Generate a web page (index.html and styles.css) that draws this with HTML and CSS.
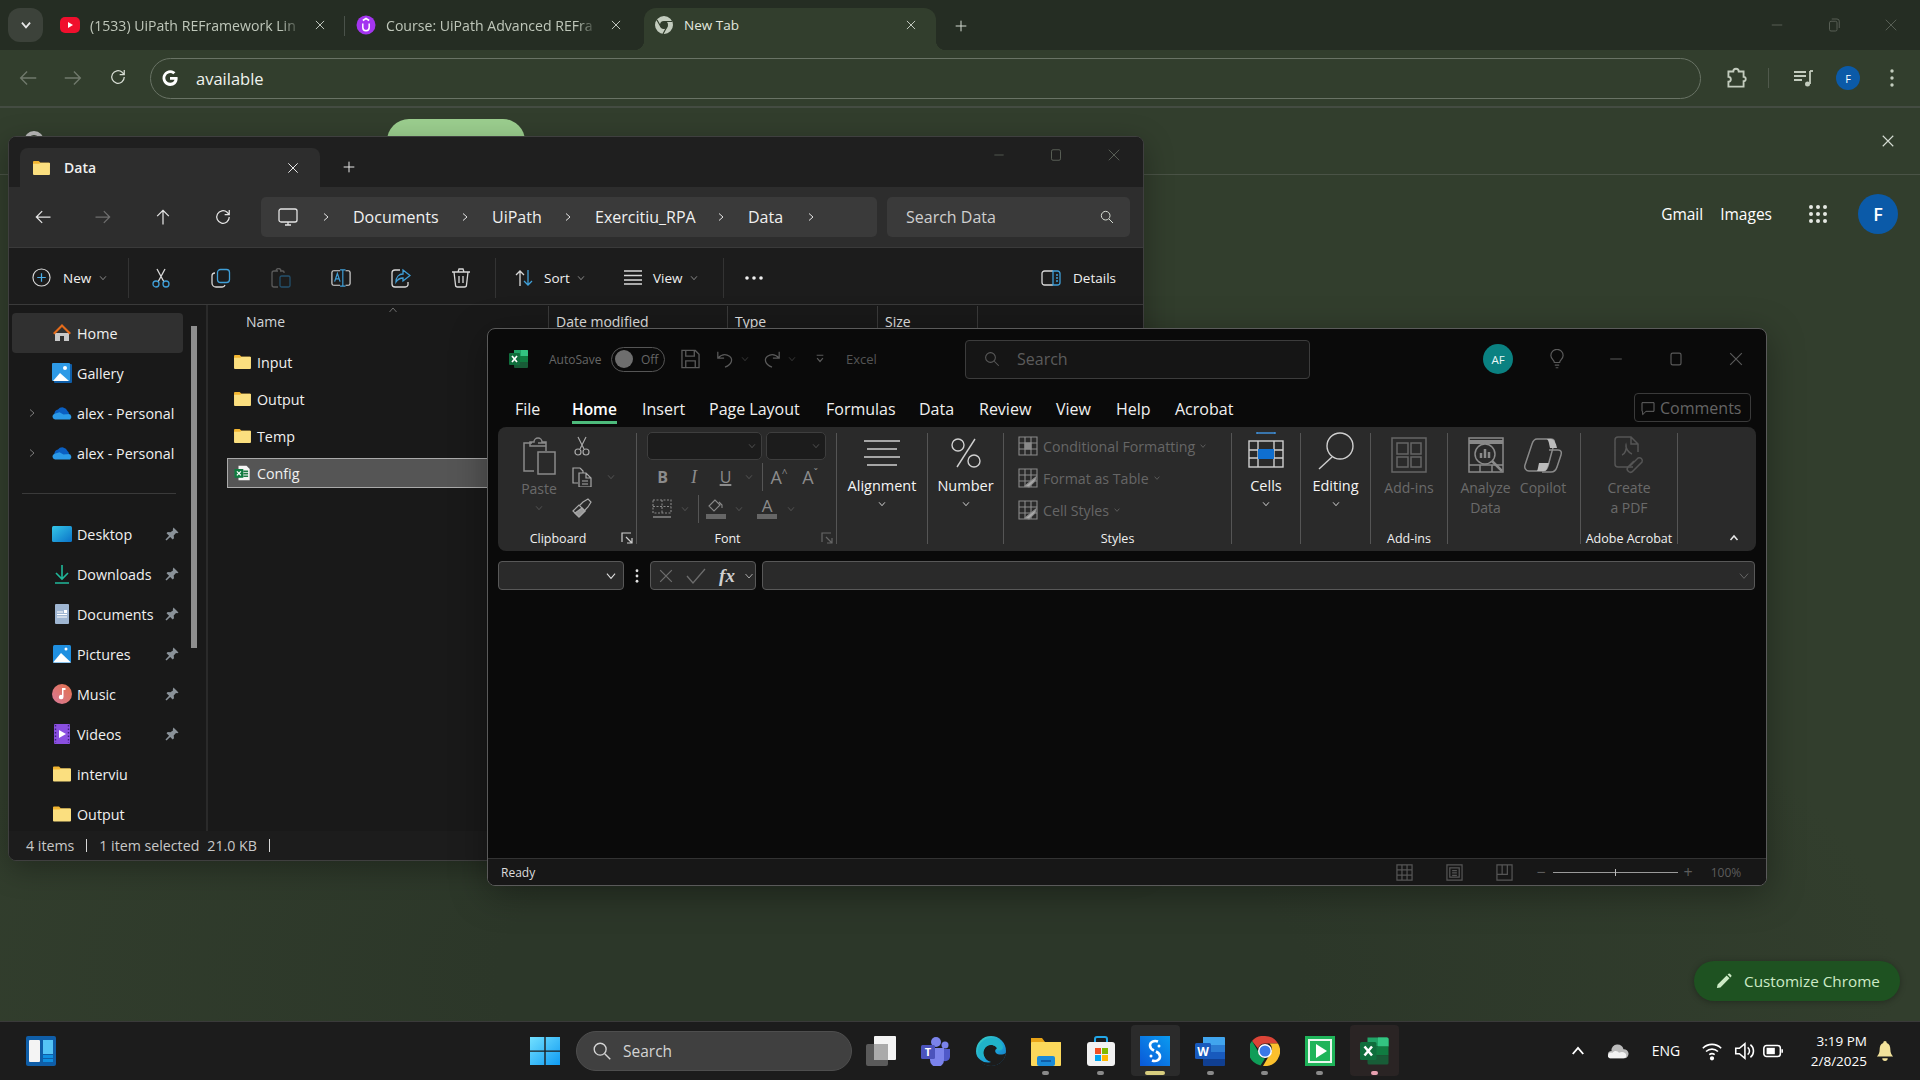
FILE: index.html
```html
<!DOCTYPE html>
<html lang="en">
<head>
<meta charset="utf-8">
<title>Desktop</title>
<link rel="stylesheet" href="styles.css">
</head>
<body>
<svg class="defs" aria-hidden="true">
  <symbol id="x" viewBox="0 0 24 24"><path d="M5 5l14 14M19 5L5 19"/></symbol>
  <symbol id="plus" viewBox="0 0 24 24"><path d="M12 4v16M4 12h16"/></symbol>
  <symbol id="min" viewBox="0 0 24 24"><path d="M5 12h14"/></symbol>
  <symbol id="max" viewBox="0 0 24 24"><rect x="6" y="5" width="12" height="14" rx="2"/></symbol>
  <symbol id="restore" viewBox="0 0 24 24"><rect x="6" y="7" width="10" height="13" rx="2"/><path d="M9 4h7a3 3 0 0 1 3 3v9"/></symbol>
  <symbol id="cd" viewBox="0 0 24 24"><path d="M5 8l7 8 7-8"/></symbol>
  <symbol id="cu" viewBox="0 0 24 24"><path d="M5 16l7-8 7 8"/></symbol>
  <symbol id="cr" viewBox="0 0 24 24"><path d="M8 5l8 7-8 7"/></symbol>
  <symbol id="al" viewBox="0 0 24 24"><path d="M21 12H4M11 5l-7 7 7 7"/></symbol>
  <symbol id="ar" viewBox="0 0 24 24"><path d="M3 12h17M13 5l7 7-7 7"/></symbol>
  <symbol id="au" viewBox="0 0 24 24"><path d="M12 21V4M5 11l7-7 7 7"/></symbol>
  <symbol id="reload" viewBox="0 0 24 24"><path d="M19.5 12a7.5 7.5 0 1 1-2.5-5.6L19.5 9M19.5 3.5V9H14"/></symbol>
  <symbol id="search" viewBox="0 0 24 24"><circle cx="10" cy="10" r="6.5"/><path d="M15 15l6 6"/></symbol>
  <symbol id="folder" viewBox="0 0 20 17"><path fill="#f2b531" stroke="none" d="M1 2a1 1 0 0 1 1-1h5l2 2h9a1 1 0 0 1 1 1v3H1z"/><path fill="#fbdf7f" stroke="none" d="M1 4h6.5L9 3h9a1 1 0 0 1 1 1v11a1 1 0 0 1-1 1H2a1 1 0 0 1-1-1z"/></symbol>
  <symbol id="xlsfile" viewBox="0 0 20 20"><path fill="#f5f5f5" stroke="none" d="M5 1h10l4 4v14H5z"/><path fill="#1d7b44" stroke="none" d="M11 7h6v2h-6zm0 3h6v2h-6zm0 3h6v2h-6z"/><rect x="0" y="5" width="11" height="11" fill="#107c41" stroke="none"/><path stroke="#fff" stroke-width="1.6" fill="none" d="M3 8l5 5M8 8l-5 5"/></symbol>
  <symbol id="pin" viewBox="0 0 16 16"><path fill="#8a9299" stroke="none" d="M9.500 1.500l5 5-1.200 .8-1.300-.2-2.300 2.500.3 2.700-1.300 1.200-2.500-2.600-3.700 3.600-1-1 3.600-3.700-2.600-2.500 1.200-1.300 2.700.3L9 4.500l-.2-1.300z"/></symbol>
  <symbol id="cloud" viewBox="0 0 20 14"><path fill="#0a5fc2" stroke="none" d="M5 12a4.500 4.500 0 0 1 1-8.500A5.500 5.500 0 0 1 15.500 5 4 4 0 0 1 17 8z"/><path fill="#2b9ae8" stroke="none" d="M3 13.500a3 3 0 0 1-.5-5.800l5-1.500 4 2.300 5-.5a3 3 0 0 1 1.500 5.500z"/></symbol>
  <symbol id="xllogo" viewBox="0 0 20 20"><path fill="#21a366" stroke="none" d="M5 1h13a1 1 0 0 1 1 1v5H5z"/><path fill="#33c481" stroke="none" d="M12 1h6a1 1 0 0 1 1 1v5h-7z"/><path fill="#107c41" stroke="none" d="M5 7h14v6H5z"/><path fill="#185c37" stroke="none" d="M5 13h14v5a1 1 0 0 1-1 1H6a1 1 0 0 1-1-1z"/><rect x="0" y="4" width="11" height="12" rx="1" fill="#0f6e3c" stroke="none"/><path stroke="#fff" stroke-width="1.7" fill="none" d="M3 7l5 6M8 7l-5 6"/></symbol>
  <symbol id="launch" viewBox="0 0 12 12"><path d="M1 10V1h9M5 5l6 6M6 11h5V6"/></symbol>
</svg>

<div class="desktop">
  <main class="chrome">
    <div class="tabstrip">
      <div class="tab-search"><svg class="ic w14 thick"><use href="#cd"/></svg></div>
      <div class="tab">
        <svg class="tab-ico" viewBox="0 0 20 20"><rect x="0" y="2" width="20" height="16" rx="5" fill="#f00f2d"/><path fill="#fff" d="M8 7l5 3-5 3z"/></svg>
        <span class="tab-title">(1533) UiPath REFramework Lin</span>
        <svg class="ic w14 tab-x"><use href="#x"/></svg>
      </div>
      <div class="tab-sep"></div>
      <div class="tab">
        <svg class="tab-ico" viewBox="0 0 20 20"><circle cx="10" cy="10" r="9.500" fill="#a435f0"/><path fill="none" stroke="#fff" stroke-width="1.500" d="M6.800 8.500v4a3.200 3.200 0 0 0 6.400 0v-4M6.800 5.500L10 3.500l3.200 2"/></svg>
        <span class="tab-title">Course: UiPath Advanced REFra</span>
        <svg class="ic w14 tab-x"><use href="#x"/></svg>
      </div>
      <div class="tab tab-active">
        <svg class="tab-ico" viewBox="0 0 20 20"><circle cx="10" cy="10" r="6.500" fill="none" stroke="#c3ccbe" stroke-width="5"/><circle cx="10" cy="10" r="3.200" fill="#323e2d"/><path d="M10 6.500h8M7 12L3 5M12.500 12.500L9 19" stroke="#323e2d" stroke-width="1.200"/></svg>
        <span class="tab-title">New Tab</span>
        <svg class="ic w14 tab-x"><use href="#x"/></svg>
      </div>
      <svg class="ic w16 new-tab"><use href="#plus"/></svg>
      <div class="caption dim">
        <svg class="ic w18"><use href="#min"/></svg>
        <svg class="ic w18"><use href="#restore"/></svg>
        <svg class="ic w18"><use href="#x"/></svg>
      </div>
    </div>

    <div class="toolbar">
      <div class="tool-nav">
        <svg class="ic w22 faint"><use href="#al"/></svg>
        <svg class="ic w22 faint"><use href="#ar"/></svg>
        <svg class="ic w20"><use href="#reload"/></svg>
      </div>
      <div class="omnibox">
        <svg class="g-logo" viewBox="0 0 24 24"><path d="M12 10.500v3.800h6c-.6 2.600-2.900 4-5.800 4a6.400 6.400 0 1 1 4.200-11.200l2.800-2.800A10.400 10.400 0 1 0 12.200 22.600c5.800 0 10-4 10-10 0-.8-.1-1.400-.2-2.100z"/></svg>
        <span>available</span>
      </div>
      <svg class="puzzle" viewBox="0 0 24 24"><path d="M5 6h4.500a2.500 2.500 0 0 1 5 0H19v5a2 2 0 0 1 0 4v5H5v-4.500a2 2 0 0 0 0-4.500z"/></svg>
      <div class="tool-sep"></div>
      <svg class="media" viewBox="0 0 24 24"><path d="M3 6h12M3 10h12M3 14h8"/><path d="M19 5v13"/><path d="M19 5h3"/><circle cx="16.500" cy="18" r="2.500" fill="#c3ccbe" stroke="none"/></svg>
      <div class="avatar av-small">F</div>
      <svg class="kebab" viewBox="0 0 4 20"><circle cx="2" cy="3" r="1.700"/><circle cx="2" cy="10" r="1.700"/><circle cx="2" cy="17" r="1.700"/></svg>
    </div>

    <div class="infobar">
      <svg class="info-ico" viewBox="0 0 20 20"><circle cx="10" cy="10" r="8" fill="none" stroke="#bbb" stroke-width="4"/></svg>
      <span class="info-text">Chrome isn't your default browser</span>
      <span class="info-btn">Set as default</span>
      <svg class="ic w18 info-x"><use href="#x"/></svg>
    </div>

    <div class="page">
      <header class="page-head">
        <a class="plink">Gmail</a>
        <a class="plink">Images</a>
        <svg class="apps" viewBox="0 0 20 20"><g><circle cx="3" cy="3" r="2"/><circle cx="10" cy="3" r="2"/><circle cx="17" cy="3" r="2"/><circle cx="3" cy="10" r="2"/><circle cx="10" cy="10" r="2"/><circle cx="17" cy="10" r="2"/><circle cx="3" cy="17" r="2"/><circle cx="10" cy="17" r="2"/><circle cx="17" cy="17" r="2"/></g></svg>
        <div class="avatar av-big">F</div>
      </header>
      <div class="customize">
        <svg class="pencil" viewBox="0 0 18 18"><path d="M1 17l.8-4L12 2.800l3.200 3.200L5 16.200zM13 1.800l1.200-1a1 1 0 0 1 1.400 0l1.600 1.600a1 1 0 0 1 0 1.400l-1 1.200z"/></svg>
        <span>Customize Chrome</span>
      </div>
    </div>
  </main>

  <footer class="taskbar">
    <div class="tb-left">
      <svg class="tb-ico" viewBox="0 0 30 30"><rect x="0" y="0" width="30" height="30" rx="2" fill="#0f5ea8"/><rect x="3" y="4" width="11" height="22" rx="1" fill="#f4f4f4"/><rect x="17" y="4" width="10" height="14" fill="#55c4f5"/><rect x="17" y="19" width="10" height="3" fill="#0f8fe0"/><rect x="17" y="23" width="10" height="3" fill="#0f8fe0"/></svg>
    </div>
    <div class="tb-start">
      <svg class="tb-ico" viewBox="0 0 30 30"><defs><linearGradient id="wg" x1="0" y1="0" x2="1" y2="1"><stop offset="0" stop-color="#72e0ff"/><stop offset="1" stop-color="#0f9bf2"/></linearGradient></defs><path fill="url(#wg)" d="M0 1h14.300v13.500H0zM15.700 1H30v13.500H15.700zM0 15.700h14.300V29H0zM15.700 15.700H30V29H15.700z"/></svg>
    </div>
    <div class="tb-search">
      <svg class="ic w22 tb-search-ico"><use href="#search"/></svg>
      <span>Search</span>
    </div>
    <div class="tb-apps">
      <div class="tb-app"><svg class="tb-ico" viewBox="0 0 30 30"><rect x="0" y="8" width="22" height="22" rx="2" fill="#5a5a5a"/><rect x="8" y="0" width="22" height="24" rx="1" fill="#f4f4f4"/><rect x="8" y="8" width="14" height="16" fill="#aaa"/></svg></div>
      <div class="tb-app"><svg class="tb-ico" viewBox="0 0 30 30"><circle cx="24" cy="9" r="3.500" fill="#7b83eb"/><circle cx="15" cy="6" r="5" fill="#7b83eb"/><path fill="#5059c9" d="M20 13h9v8a5 5 0 0 1-9 2z"/><path fill="#7b83eb" d="M9 12h14v12a7 7 0 0 1-14 0z"/><rect x="0" y="9" width="14" height="14" rx="1.500" fill="#4b53bc"/><text class="svg-t" x="7" y="20" text-anchor="middle" font-size="11">T</text></svg></div>
      <div class="tb-app"><svg class="tb-ico" viewBox="0 0 30 30"><defs><linearGradient id="eg" x1="0" y1="0" x2="1" y2="1"><stop offset="0" stop-color="#39d1c3"/><stop offset=".6" stop-color="#1b9fd8"/><stop offset="1" stop-color="#1668b8"/></linearGradient></defs><circle cx="15" cy="15" r="15" fill="url(#eg)"/><path fill="#1c1c1c" d="M30 17c-3 2-8 2-10 0-1.500-1.500-1-4 1.500-5C19 8 11 7 8 13c-2 4 0 11 7 13-6 2-13-2-15-8 .5 7 7 12 15 12 8 0 14-6 15-13z"/><path fill="#20b3c9" d="M2 15C2 8 8 2 15 2c6 0 11 3.500 12 9 0 3-3 4-6 3 1-5-10-8-13 0-1 2-1 5 1 8-5-1-7-4-7-7z"/></svg></div>
      <div class="tb-app"><svg class="tb-ico" viewBox="0 0 30 30"><path fill="#e8a317" d="M0 2h11l3 4h16v4H0z"/><rect x="0" y="6" width="30" height="24" rx="1" fill="#fbd85b"/><rect x="6" y="20" width="18" height="10" rx="2" fill="#1a8bd8"/><rect x="10" y="24" width="10" height="2" fill="#0f5ea8"/></svg><span class="dot"></span></div>
      <div class="tb-app"><svg class="tb-ico" viewBox="0 0 30 30"><path d="M9 8V3a2 2 0 0 1 2-2h8a2 2 0 0 1 2 2v5" fill="none" stroke="#22a7e8" stroke-width="2"/><rect x="1" y="6" width="28" height="24" rx="3" fill="#f2f2f2"/><rect x="9" y="12" width="6" height="6" fill="#f25022"/><rect x="16" y="12" width="6" height="6" fill="#7fba00"/><rect x="9" y="19" width="6" height="6" fill="#00a4ef"/><rect x="16" y="19" width="6" height="6" fill="#ffb900"/></svg><span class="dot"></span></div>
      <div class="tb-app tb-active"><svg class="tb-ico" viewBox="0 0 30 30"><defs><linearGradient id="sg" x1="0" y1="1" x2="1" y2="0"><stop offset="0" stop-color="#0a58d8"/><stop offset="1" stop-color="#0a9bf0"/></linearGradient></defs><rect width="30" height="30" fill="url(#sg)"/><path d="M18 5.500c-4-1.500-8 .5-8 4 0 2.500 2 4 4 5" fill="none" stroke="#fff" stroke-width="2.600"/><path d="M12 24.500c4 1.500 8-.5 8-4 0-2.500-2-4-4-5" fill="none" stroke="#fff" stroke-width="2.600"/><circle cx="19" cy="10" r="1.500" fill="#fff"/><circle cx="11" cy="20" r="1.500" fill="#fff"/></svg><span class="bar"></span></div>
      <div class="tb-app"><svg class="tb-ico" viewBox="0 0 30 30"><path fill="#41a5ee" d="M8 1h21a1 1 0 0 1 1 1v7H8z"/><rect x="8" y="9" width="22" height="7" fill="#2b7cd3"/><rect x="8" y="16" width="22" height="7" fill="#185abd"/><path fill="#103f91" d="M8 23h22v6a1 1 0 0 1-1 1H9a1 1 0 0 1-1-1z"/><rect x="0" y="7" width="16" height="16" rx="1.500" fill="#185abd"/><text class="svg-t" x="8" y="20" text-anchor="middle" font-size="12">W</text></svg><span class="dot"></span></div>
      <div class="tb-app"><svg class="tb-ico" viewBox="0 0 30 30"><path fill="#db4437" d="M15 0a15 15 0 0 1 13 7.500H15a7.500 7.500 0 0 0-7 5L2 5A15 15 0 0 1 15 0z"/><path fill="#0f9d58" d="M2 5l6.500 11a7.500 7.500 0 0 0 6.500 6.500L10.500 29.500A15 15 0 0 1 2 5z"/><path fill="#fbc02d" d="M28 7.500a15 15 0 0 1-15 22.400l6.500-11a7.500 7.500 0 0 0 0-11.400z"/><circle cx="15" cy="15" r="7" fill="#fff"/><circle cx="15" cy="15" r="5.500" fill="#3b78e7"/></svg><span class="dot"></span></div>
      <div class="tb-app"><svg class="tb-ico" viewBox="0 0 30 30"><rect width="30" height="30" fill="#1fb45a"/><rect x="3" y="3" width="24" height="24" fill="#e8f8ee"/><rect x="5" y="5" width="20" height="20" fill="#1fb45a"/><path fill="#fff" d="M11 8l11 7-11 7z"/></svg><span class="dot"></span></div>
      <div class="tb-app tb-open"><svg class="tb-ico"><use href="#xllogo"/></svg><span class="dot dot-pink"></span></div>
    </div>
    <div class="tray">
      <svg class="ic w18 thick tray-i"><use href="#cu"/></svg>
      <svg class="tray-i cloud-i" viewBox="0 0 24 18"><path fill="#bbb" d="M5 17a4 4 0 0 1 0-8 6 6 0 0 1 6-7 7 7 0 0 1 7 5 5 5 0 0 1 1 10z"/><path fill="#f2f2f2" d="M3 17a3 3 0 0 1 3-6c2-3 6-2 7 0 3-2 8-1 8 3 0 2-1 3-3 3z"/></svg>
      <span class="tray-t">ENG</span>
      <svg class="tray-i tray-s" viewBox="0 0 24 24"><path d="M2 9a14 14 0 0 1 20 0M5.500 12.500a9.500 9.500 0 0 1 13 0M9 16a5 5 0 0 1 6 0"/><circle cx="12" cy="20" r="1.500" fill="#fff"/></svg>
      <svg class="tray-i tray-s" viewBox="0 0 24 24"><path d="M3 9v6h4l6 5V4L7 9zM16 8a5 5 0 0 1 0 8M19 5a9 9 0 0 1 0 14"/></svg>
      <svg class="tray-i tray-s" viewBox="0 0 24 24"><rect x="2" y="6" width="18" height="12" rx="3"/><rect x="5" y="8.500" width="9" height="7" fill="#fff" stroke="none"/><path d="M22 10v4"/></svg>
      <div class="clock"><span>3:19 PM</span><span>2/8/2025</span></div>
      <svg class="tray-i bell" viewBox="0 0 20 24"><path fill="#f2e29b" d="M10 1a2 2 0 0 1 2 2c3 1 4 4 4 8 0 3 1 5 3 7H1c2-2 3-4 3-7 0-4 1-7 4-8a2 2 0 0 1 2-2z"/><path fill="#f2e29b" d="M7 20h6a3 3 0 0 1-6 0z"/></svg>
    </div>
  </footer>

  <!-- File Explorer window -->
  <section class="win explorer">
    <div class="ex-tabs">
      <div class="ex-tab">
        <svg class="ex-folder"><use href="#folder"/></svg>
        <span>Data</span>
        <svg class="ic w16 ex-tab-x"><use href="#x"/></svg>
      </div>
      <svg class="ic w16 ex-plus"><use href="#plus"/></svg>
      <div class="caption ex-caption dim">
        <svg class="ic w16"><use href="#min"/></svg>
        <svg class="ic w18"><use href="#max"/></svg>
        <svg class="ic w18"><use href="#x"/></svg>
      </div>
    </div>
    <div class="ex-nav">
      <div class="ex-arrows">
        <svg class="ic w20"><use href="#al"/></svg>
        <svg class="ic w20 faint"><use href="#ar"/></svg>
        <svg class="ic w20"><use href="#au"/></svg>
        <svg class="ic w20"><use href="#reload"/></svg>
      </div>
      <div class="crumbs">
        <svg class="pc" viewBox="0 0 20 20"><rect x="1" y="2" width="18" height="13" rx="2"/><path d="M7 18h6M10 15v3"/></svg>
        <svg class="ic w12"><use href="#cr"/></svg>
        <span>Documents</span>
        <svg class="ic w12"><use href="#cr"/></svg>
        <span>UiPath</span>
        <svg class="ic w12"><use href="#cr"/></svg>
        <span>Exercitiu_RPA</span>
        <svg class="ic w12"><use href="#cr"/></svg>
        <span>Data</span>
        <svg class="ic w12"><use href="#cr"/></svg>
      </div>
      <div class="ex-search">
        <span>Search Data</span>
        <svg class="ic w16"><use href="#search"/></svg>
      </div>
    </div>
    <div class="ex-cmd">
      <div class="cmd-new">
        <svg class="cmd-plus" viewBox="0 0 20 20"><circle cx="10" cy="10" r="9" fill="none" stroke="#d8d8d8" stroke-width="1.200"/><path d="M10 5.500v9M5.500 10h9" stroke="#4db0ea" stroke-width="1.300"/></svg>
        <span>New</span>
        <svg class="ic w10"><use href="#cd"/></svg>
      </div>
      <div class="cmd-sep"></div>
      <div class="cmd-icons">
        <svg class="cmd-i" viewBox="0 0 20 20"><path stroke="#d8d8d8" d="M6 1l7 13M14 1L7 14"/><circle cx="5" cy="16" r="3" stroke="#3f9fd8"/><circle cx="15" cy="16" r="3" stroke="#3f9fd8"/></svg>
        <svg class="cmd-i" viewBox="0 0 20 20"><rect x="6.500" y="1.500" width="12" height="13" rx="3" stroke="#3f9fd8"/><path stroke="#d8d8d8" d="M4 5a3 3 0 0 0-3 3v7a4 4 0 0 0 4 4h6a3 3 0 0 0 3-2"/></svg>
        <svg class="cmd-i cmd-off" viewBox="0 0 20 20"><path stroke="#5a5a5a" d="M7 3H3a2 2 0 0 0-2 2v12a2 2 0 0 0 2 2h4M13 5V4a1 1 0 0 0-1-1H9M5 3a2 2 0 0 1 5 0"/><rect x="9" y="8" width="10" height="11" rx="1.500" stroke="#24506c"/></svg>
        <svg class="cmd-i" viewBox="0 0 22 20"><path stroke="#d8d8d8" d="M10 2H3a2 2 0 0 0-2 2v12a2 2 0 0 0 2 2h7M16 2h3a2 2 0 0 1 2 2v12a2 2 0 0 1-2 2h-3"/><path stroke="#3f9fd8" d="M10 1h6M13 1v18M10 19h6M4 14l3-9 3 9M5 11h4"/></svg>
        <svg class="cmd-i" viewBox="0 0 20 20"><path stroke="#d8d8d8" d="M9 2H4a3 3 0 0 0-3 3v11a3 3 0 0 0 3 3h10a3 3 0 0 0 3-2v-3"/><path stroke="#3f9fd8" d="M12 2l7 5.500-7 5.500V10c-3 0-5 1-7 4 0-5 3-8 7-8z"/></svg>
        <svg class="cmd-i" viewBox="0 0 20 20"><path stroke="#d8d8d8" d="M1 4h18M3 4l1.500 13a2 2 0 0 0 2 2h7a2 2 0 0 0 2-2L17 4M7 4l1-3h4l1 3M8 8v7M12 8v7"/></svg>
      </div>
      <div class="cmd-sep"></div>
      <div class="cmd-btn cmd-sort">
        <svg class="cmd-i" viewBox="0 0 20 20"><path stroke="#d8d8d8" d="M6 18V3M2 7l4-4 4 4"/><path stroke="#3f9fd8" d="M14 2v15M10 13l4 4 4-4"/></svg>
        <span>Sort</span>
        <svg class="ic w10"><use href="#cd"/></svg>
      </div>
      <div class="cmd-btn cmd-view">
        <svg class="cmd-i" viewBox="0 0 20 20"><path stroke="#d8d8d8" d="M1 3h18M1 7.500h18M1 12h18M1 16h18"/></svg>
        <span>View</span>
        <svg class="ic w10"><use href="#cd"/></svg>
      </div>
      <div class="cmd-sep"></div>
      <svg class="cmd-more" viewBox="0 0 20 4"><circle cx="3" cy="2" r="1.800"/><circle cx="10" cy="2" r="1.800"/><circle cx="17" cy="2" r="1.800"/></svg>
      <div class="cmd-btn cmd-details">
        <svg class="cmd-i" viewBox="0 0 20 16"><path stroke="#d8d8d8" d="M12 1H3.500A2.500 2.500 0 0 0 1 3.500v9A2.500 2.500 0 0 0 3.500 15H12"/><path stroke="#3f9fd8" d="M12 1h4.500A2.500 2.500 0 0 1 19 3.500v9a2.500 2.500 0 0 1-2.500 2.500H12zM15 5h2M15 8h2M15 11h2"/></svg>
        <span>Details</span>
      </div>
    </div>
    <div class="ex-body">
      <nav class="ex-side">
        <div class="nv nv-on"><span class="nv-exp"></span>
          <svg class="nv-i" viewBox="0 0 20 20"><path fill="#c8c8c8" d="M3 10h14v8h-5v-5H8v5H3z"/><path fill="#e46b1a" d="M10 1l9 9-1.500 1.500L10 4l-7.500 7.500L1 10z"/></svg><span>Home</span></div>
        <div class="nv"><span class="nv-exp"></span>
          <svg class="nv-i" viewBox="0 0 20 20"><rect x="2" y="1" width="18" height="19" rx="1" fill="#0f5ea8"/><rect x="0" y="0" width="18" height="18" rx="1" fill="#2e9ae6"/><path fill="#fff" d="M1 18l7-8 9 8z"/><circle cx="13" cy="5" r="2" fill="#fff"/></svg><span>Gallery</span></div>
        <div class="nv"><span class="nv-exp"><svg class="ic w12 gray"><use href="#cr"/></svg></span>
          <svg class="nv-i"><use href="#cloud"/></svg><span>alex - Personal</span></div>
        <div class="nv"><span class="nv-exp"><svg class="ic w12 gray"><use href="#cr"/></svg></span>
          <svg class="nv-i"><use href="#cloud"/></svg><span>alex - Personal</span></div>
        <div class="nv-rule"></div>
        <div class="nv"><span class="nv-exp"></span>
          <svg class="nv-i" viewBox="0 0 20 16"><defs><linearGradient id="dg" x1="0" y1="0" x2="1" y2="1"><stop offset="0" stop-color="#35c7e8"/><stop offset="1" stop-color="#0a72c8"/></linearGradient></defs><rect width="20" height="16" rx="1.500" fill="url(#dg)"/></svg><span>Desktop</span><svg class="pin"><use href="#pin"/></svg></div>
        <div class="nv"><span class="nv-exp"></span>
          <svg class="nv-i" viewBox="0 0 20 20"><path fill="none" stroke="#20b89a" stroke-width="1.600" d="M10 1v14M4 9l6 6 6-6M3 19h14"/></svg><span>Downloads</span><svg class="pin"><use href="#pin"/></svg></div>
        <div class="nv"><span class="nv-exp"></span>
          <svg class="nv-i" viewBox="0 0 20 20"><rect x="3" y="0" width="14" height="20" rx="1" fill="#9fb6d2"/><path stroke="#fff" stroke-width="1" d="M5 8h6M5 10.500h10M5 13h10"/><rect x="12" y="6" width="3" height="3" fill="#fff"/></svg><span>Documents</span><svg class="pin"><use href="#pin"/></svg></div>
        <div class="nv"><span class="nv-exp"></span>
          <svg class="nv-i" viewBox="0 0 20 20"><rect x="1" y="1" width="18" height="18" rx="1.500" fill="#1f8fe0"/><path fill="#fff" d="M1 18.500L9 9l10 9.500z"/><circle cx="14" cy="5" r="1.500" fill="#fff"/></svg><span>Pictures</span><svg class="pin"><use href="#pin"/></svg></div>
        <div class="nv"><span class="nv-exp"></span>
          <svg class="nv-i" viewBox="0 0 20 20"><defs><linearGradient id="mg" x1="1" y1="0" x2="0" y2="1"><stop offset="0" stop-color="#e2704a"/><stop offset="1" stop-color="#d97a9a"/></linearGradient></defs><circle cx="10" cy="10" r="10" fill="url(#mg)"/><path fill="#fff" d="M10 4h3.500v2H11.500v7a2.300 2.300 0 1 1-1.500-2.100z"/></svg><span>Music</span><svg class="pin"><use href="#pin"/></svg></div>
        <div class="nv"><span class="nv-exp"></span>
          <svg class="nv-i" viewBox="0 0 20 20"><rect x="2" y="0" width="16" height="20" rx="1" fill="#8a4fe0"/><path fill="#fff" d="M7 6l7 4-7 4z"/><path stroke="#3a1f7a" stroke-width="1.400" stroke-dasharray="1.500 2" d="M3.500 1v18M16.500 1v18"/></svg><span>Videos</span><svg class="pin"><use href="#pin"/></svg></div>
        <div class="nv"><span class="nv-exp"></span><svg class="nv-i"><use href="#folder"/></svg><span>interviu</span></div>
        <div class="nv"><span class="nv-exp"></span><svg class="nv-i"><use href="#folder"/></svg><span>Output</span></div>
        <div class="nv-scroll"></div>
      </nav>
      <div class="ex-main">
        <div class="ex-head">
          <div class="hd hd-name">Name<svg class="ic w12 hd-caret"><use href="#cu"/></svg></div>
          <div class="hd hd-date">Date modified</div>
          <div class="hd hd-type">Type</div>
          <div class="hd hd-size">Size</div>
        </div>
        <div class="ex-rows">
          <div class="row"><svg class="row-i"><use href="#folder"/></svg><span>Input</span></div>
          <div class="row"><svg class="row-i"><use href="#folder"/></svg><span>Output</span></div>
          <div class="row"><svg class="row-i"><use href="#folder"/></svg><span>Temp</span></div>
          <div class="row row-sel"><svg class="row-i"><use href="#xlsfile"/></svg><span>Config</span></div>
        </div>
      </div>
    </div>
    <div class="ex-status">
      <span>4 items</span><i></i><span>1 item selected</span><span class="st-size">21.0 KB</span><i></i>
    </div>
  </section>

  <!-- Excel window -->
  <section class="win excel">
    <div class="xl-title">
      <svg class="xl-logo"><use href="#xllogo"/></svg>
      <span class="xl-autosave">AutoSave</span>
      <div class="xl-toggle"><b></b><span>Off</span></div>
      <svg class="xl-save" viewBox="0 0 20 20"><path d="M1 1h14l4 4v14H1zM5 1v6h9V1M5 19v-7h10v7"/></svg>
      <svg class="xl-undo" viewBox="0 0 20 20"><path d="M2 2v7h7M2 9c4-4 9-5 13-2 4 3 3 9-5 12"/></svg>
      <svg class="ic w10 xl-c1 gray"><use href="#cd"/></svg>
      <svg class="xl-redo" viewBox="0 0 20 20"><path d="M18 2v7h-7M18 9c-4-4-9-5-13-2-4 3-3 9 5 12"/></svg>
      <svg class="ic w10 xl-c1 gray"><use href="#cd"/></svg>
      <svg class="xl-cust" viewBox="0 0 12 12"><path d="M2 1.500h8M2.500 5l3.500 4 3.500-4"/></svg>
      <span class="xl-name">Excel</span>
      <div class="xl-search"><svg class="ic w18"><use href="#search"/></svg><span>Search</span></div>
      <div class="avatar av-teal">AF</div>
      <svg class="xl-bulb" viewBox="0 0 16 22"><path d="M5 15c0-3-4-4-4-8a7 7 0 0 1 14 0c0 4-4 5-4 8zM5.500 18h5M6.500 21h3"/></svg>
      <svg class="ic w20 xl-min"><use href="#min"/></svg>
      <svg class="ic w20 xl-max"><use href="#max"/></svg>
      <svg class="ic w20 xl-close"><use href="#x"/></svg>
    </div>

    <div class="xl-tabs">
      <div class="xl-tablist">
        <span>File</span><span class="xl-tab-on">Home</span><span>Insert</span><span>Page Layout</span><span>Formulas</span><span>Data</span><span>Review</span><span>View</span><span>Help</span><span>Acrobat</span>
      </div>
      <div class="xl-comments">
        <svg class="ic w16" viewBox="0 0 24 24"><path d="M3 4h18v13H9l-5 5v-5H3z"/></svg>
        <span>Comments</span>
      </div>
    </div>

    <div class="ribbon">
      <div class="rg rg-clip">
        <div class="rg-body clip-body">
          <div class="paste">
            <svg class="paste-i" viewBox="0 0 34 38"><path d="M10 6H2v28h10M24 14V6h-8M8 9V5h4a4 4 0 0 1 8 0h4v4H8z"/><rect x="16" y="15" width="17" height="22"/></svg>
            <span class="off">Paste</span>
            <svg class="ic w10 gray"><use href="#cd"/></svg>
          </div>
          <div class="clip-col">
            <svg class="clip-i" viewBox="0 0 20 20"><path d="M6 1l6 12M14 1L8 13"/><circle cx="6" cy="16" r="3"/><circle cx="14" cy="16" r="3"/></svg>
            <div class="clip-copy"><svg class="clip-i" viewBox="0 0 20 20"><path d="M8 1H1v15h5M8 1l3 3v2M7 6h7l5 5v9H7zM14 6v5h5M10 14h6M10 17h6"/></svg><svg class="ic w10 gray"><use href="#cd"/></svg></div>
            <svg class="clip-i" viewBox="0 0 20 20"><path d="M1 13l6-6 6 6-6 6-3-3zM8 7l3-3 5-3 3 3-3 5-3 3"/><path d="M3 15l7-5 3 3-6 6z" fill="#999"/></svg>
          </div>
        </div>
        <div class="rg-label lab-clip">Clipboard<svg class="launch"><use href="#launch"/></svg></div>
      </div>

      <div class="rg rg-font">
        <div class="rg-body font-body">
          <div class="font-top">
            <div class="fbox f-name"><svg class="ic w10 gray"><use href="#cd"/></svg></div>
            <div class="fbox f-size"><svg class="ic w10 gray"><use href="#cd"/></svg></div>
          </div>
          <div class="font-r2">
            <b class="fc fb">B</b><i class="fc fi">I</i><u class="fc fu">U</u>
            <svg class="ic w10 gray"><use href="#cd"/></svg>
            <span class="vsep"></span>
            <span class="fc fa1">A<sup>^</sup></span>
            <span class="fc fa2">A<sup>ˇ</sup></span>
          </div>
          <div class="font-r3">
            <svg class="f-ic" viewBox="0 0 20 20"><path stroke-dasharray="2 1.500" d="M1 1h18v13H1zM10 1v13M1 7.500h18"/><path d="M1 18h18" stroke-width="1.500"/></svg>
            <svg class="ic w10 gray"><use href="#cd"/></svg>
            <span class="vsep"></span>
            <div class="f-fill"><svg class="f-ic" viewBox="0 0 20 14"><path d="M9 1L3 7l5 5 6-6zM13 3l3 3v3"/></svg><span class="swatch"></span></div>
            <svg class="ic w10 gray"><use href="#cd"/></svg>
            <div class="f-fill"><span class="fa3">A</span><span class="swatch"></span></div>
            <svg class="ic w10 gray"><use href="#cd"/></svg>
          </div>
        </div>
        <div class="rg-label lab-clip">Font<svg class="launch launch-off"><use href="#launch"/></svg></div>
      </div>

      <div class="rg rg-align">
        <div class="rg-body big">
          <svg class="big-i align-i" viewBox="0 0 36 26"><path d="M0 1h36M3 9h30M0 17h36M3 25h30"/></svg>
          <span>Alignment</span>
          <svg class="ic w10 big-c"><use href="#cd"/></svg>
        </div>
      </div>

      <div class="rg rg-num">
        <div class="rg-body big">
          <svg class="big-i pct-i" viewBox="0 0 30 30"><circle cx="7" cy="7" r="6"/><circle cx="23" cy="23" r="6"/><path d="M24 1L6 29"/></svg>
          <span>Number</span>
          <svg class="ic w10 big-c"><use href="#cd"/></svg>
        </div>
      </div>

      <div class="rg rg-styles">
        <div class="rg-body styles-body">
          <div class="st-row"><svg class="st-i" viewBox="0 0 20 20"><path d="M1 1h18v18H1zM1 7h18M1 13h18M7 1v18M13 1v18"/><rect x="7" y="7" width="6" height="6" fill="#888"/></svg><span>Conditional Formatting</span><svg class="ic w8 gray"><use href="#cd"/></svg></div>
          <div class="st-row"><svg class="st-i" viewBox="0 0 20 20"><path d="M1 1h18v18H1zM1 7h18M1 13h18M7 1v18M13 1v18"/><path d="M7 18l11-9-1 4-6 6z" fill="#aaa"/></svg><span>Format as Table</span><svg class="ic w8 gray"><use href="#cd"/></svg></div>
          <div class="st-row"><svg class="st-i" viewBox="0 0 20 20"><path d="M1 1h18v18H1zM1 7h18M1 13h18M7 1v18M13 1v18"/><path d="M7 18l11-9-1 4-6 6z" fill="#aaa"/></svg><span>Cell Styles</span><svg class="ic w8 gray"><use href="#cd"/></svg></div>
        </div>
        <div class="rg-label">Styles</div>
      </div>

      <div class="rg rg-cells">
        <div class="rg-body big big-tall">
          <svg class="big-i cells-i" viewBox="0 0 36 36"><path d="M9 1h18M9 0v2M27 0v2" stroke="#3f8fd8"/><rect x="1" y="9" width="34" height="26"/><path d="M1 18h34M1 26h34M10 9v26M26 9v26"/><rect x="10" y="17" width="16" height="10" fill="#0f6fd0" stroke="none"/></svg>
          <span>Cells</span>
          <svg class="ic w10 big-c"><use href="#cd"/></svg>
        </div>
      </div>

      <div class="rg rg-edit">
        <div class="rg-body big big-tall">
          <svg class="big-i edit-i" viewBox="0 0 36 38"><circle cx="22" cy="14" r="13"/><path d="M14 25L1 37"/></svg>
          <span>Editing</span>
          <svg class="ic w10 big-c"><use href="#cd"/></svg>
        </div>
      </div>

      <div class="rg rg-addin">
        <div class="rg-body col-off">
          <svg class="off-i" viewBox="0 0 36 36"><rect x="1" y="1" width="34" height="34"/><rect x="6" y="6" width="11" height="11"/><rect x="20" y="6" width="10" height="11"/><rect x="6" y="20" width="11" height="10"/><rect x="20" y="20" width="10" height="10"/></svg>
          <span class="off">Add-ins</span>
        </div>
        <div class="rg-label">Add-ins</div>
      </div>

      <div class="rg rg-ana">
        <div class="rg-body ana-body">
          <div class="col-off ana-a">
            <svg class="off-i ana-i" viewBox="0 0 36 36"><rect x="1" y="1" width="34" height="34"/><rect x="1" y="3" width="34" height="4" fill="#888" stroke="none"/><path d="M1 28h34M12 28v7M24 28v7"/><circle cx="17" cy="17" r="10" fill="#2a2a2a"/><path d="M24 24l10 10M13 21v-5M17 21v-9M21 21v-6" stroke-width="2.500"/></svg>
            <span class="off">Analyze</span><span class="off">Data</span>
          </div>
          <div class="col-off ana-c">
            <svg class="off-i cop-i" viewBox="0 0 40 36"><path d="M14 2h14c3 0 4 2 3 5l-6 22c-1 3-3 5-6 5H6c-3 0-5-3-4-6L9 7c1-3 2-5 5-5z"/><path d="M26 13h9c3 0 4 2 3 5l-4 12c-1 3-3 5-6 5h-9"/><path d="M24 2h4c3 0 5 4 6 9H27c-1-4-1-7-3-9z" fill="#bbb" stroke="none"/><path d="M14 34h7c2 0 3-2 4-5l1-3H16c-1 4-1 6-2 8z" fill="#bbb" stroke="none"/></svg>
            <span class="off">Copilot</span>
          </div>
        </div>
      </div>

      <div class="rg rg-pdf">
        <div class="rg-body col-off pdf-col">
          <svg class="off-i pdf-i" viewBox="0 0 32 40"><path d="M20 32H5a3 3 0 0 1-3-3V5a3 3 0 0 1 3-3h13l7 7v8M18 2v7h7M9 20c3-1 5-6 4-10-1 3 3 8 6 9"/><path d="M17 31l8-8a3 3 0 0 1 4 4l-9 9a3 3 0 0 1-5-4l6-6"/></svg>
          <span class="off">Create</span><span class="off">a PDF</span>
        </div>
        <div class="rg-label">Adobe Acrobat</div>
      </div>

      <div class="rg-end"><svg class="ic w12 thick"><use href="#cu"/></svg></div>
    </div>

    <div class="fx-bar">
      <div class="fx-box fx-name"><svg class="ic w14"><use href="#cd"/></svg></div>
      <svg class="fx-dots" viewBox="0 0 4 16"><circle cx="2" cy="2" r="1.600"/><circle cx="2" cy="8" r="1.600"/><circle cx="2" cy="14" r="1.600"/></svg>
      <div class="fx-box fx-btns">
        <svg class="ic w20 gray"><use href="#x"/></svg>
        <svg class="fx-chk" viewBox="0 0 20 16"><path d="M1 8l6 7L19 1"/></svg>
        <span class="fx-fx">fx</span>
        <svg class="ic w12"><use href="#cd"/></svg>
      </div>
      <div class="fx-box fx-input"><svg class="ic w14 gray"><use href="#cd"/></svg></div>
    </div>

    <div class="xl-grid"></div>

    <div class="xl-status">
      <span class="st-ready">Ready</span>
      <div class="st-right">
        <svg class="st-v" viewBox="0 0 18 18"><path d="M1 1h16v16H1zM1 6.300h16M1 11.700h16M6.300 1v16M11.700 1v16"/></svg>
        <svg class="st-v" viewBox="0 0 18 18"><path d="M1 1h16v16H1zM4 4h10v10H4zM6.500 7h5M6.500 9.500h5M6.500 12h5"/></svg>
        <svg class="st-v" viewBox="0 0 18 18"><path d="M1 1h16v16H1zM1 11h11V1M6.500 1v10"/></svg>
        <span class="st-zm">−</span>
        <div class="st-slider"><i></i></div>
        <span class="st-zm">+</span>
        <span class="st-pct">100%</span>
      </div>
    </div>
  </section>
</div>
</body>
</html>
```
FILE: styles.css
```css
* { box-sizing: border-box; }
html, body { margin: 0; height: 100%; }
body { font-family: "Open Sans", "Noto Sans", "Liberation Sans", sans-serif; color: #e8e8e8; overflow: hidden; background: #323e2d; }
.defs { position: absolute; width: 0; height: 0; }
svg { display: block; flex: none; }
.ic { fill: none; stroke: currentColor; stroke-width: 1.500; color: #d6dcd3; }
.ic use { fill: none; }
.w8 { width: 8px; height: 8px; }
.w10 { width: 10px; height: 10px; }
.w12 { width: 12px; height: 12px; }
.w14 { width: 14px; height: 14px; }
.w16 { width: 16px; height: 16px; }
.w18 { width: 18px; height: 18px; }
.w20 { width: 20px; height: 20px; }
.w22 { width: 22px; height: 22px; }
.thick { stroke-width: 3; color: #e8e8e8; }
.faint { color: #70796c; }
.gray { color: #6d6d6d; }

.desktop { position: relative; width: 1920px; height: 1080px; display: flex; flex-direction: column; overflow: hidden; }

/* Chrome */
.chrome { flex: 1; display: flex; flex-direction: column; min-height: 0; background: #323e2d; }
.tabstrip { height: 50px; background: #252d23; display: flex; align-items: flex-end; padding-left: 8px; flex: none; }
.tab-search { width: 35px; height: 34px; margin-bottom: 8px; border-radius: 12px; background: #3c423a; display: flex; align-items: center; justify-content: center; margin-right: 9px; }
.tab { width: 290px; height: 42px; display: flex; align-items: center; padding: 0 0 8px 8px; color: #bfc7ba; font-size: 14.100px; position: relative; }
.tab-ico { width: 20px; height: 20px; margin-right: 10px; }
.tab-title { width: 212px; white-space: nowrap; -webkit-mask-image: linear-gradient(90deg, #000 90%, transparent); mask-image: linear-gradient(90deg, #000 90%, transparent); }
.tab-x { margin-left: 11px; color: #d6dcd3; }
.tab-sep { width: 1px; height: 20px; background: #4a524a; margin: 0 6px 14px 2px; }
.tab + .tab-sep + .tab { padding-left: 5px; width: 287px; }
.tab-active { width: 292px; margin-left: 6px; background: #323e2d; border-radius: 12px 12px 0 0; color: #e3e8df; padding-left: 10px; font-size: 13.500px; }
.tab-active .tab-ico { margin-right: 10px; }
.tab-active .tab-title { width: 209px; mask-image: none; -webkit-mask-image: none; }
.tab-active::before, .tab-active::after { content: ""; position: absolute; bottom: 0; width: 10px; height: 10px; }
.tab-active::before { left: -10px; background: radial-gradient(circle at 0 0, transparent 10px, #323e2d 10.500px); }
.tab-active::after { right: -10px; background: radial-gradient(circle at 100% 0, transparent 10px, #323e2d 10.500px); }
.new-tab { margin: 0 0 16px 17px; }
.caption { display: flex; margin-left: auto; align-items: center; }
.tabstrip .caption { height: 50px; gap: 39px; padding-right: 20px; }
.dim .ic { color: #5d645a; stroke-width: 1.200; }

.toolbar { height: 58px; flex: none; display: flex; align-items: center; border-bottom: 2px solid #444c42; color: #c3ccbe; }
.tool-nav { display: grid; grid-template-columns: repeat(3, 45px); justify-items: center; padding-left: 5px; }
.omnibox { margin-left: 10px; width: 1551px; height: 41px; border: 1.500px solid #697365; border-radius: 21px; display: flex; align-items: center; padding: 1px 0 0 10px; font-size: 16.500px; color: #f0f3ee; }
.g-logo { width: 18px; height: 18px; fill: #fff; margin: -1px 17px 0 0; }
.puzzle { width: 26px; height: 26px; margin-left: 22px; fill: none; stroke: #c3ccbe; stroke-width: 1.700; }
.tool-sep { width: 1px; height: 20px; background: #50594c; margin-left: 19px; }
.media { width: 24px; height: 24px; margin-left: 22px; fill: none; stroke: #c3ccbe; stroke-width: 1.800; }
.avatar { border-radius: 50%; background: #0b5aa8; color: #fff; display: flex; align-items: center; justify-content: center; flex: none; }
.av-small { width: 24px; height: 24px; font-size: 11px; margin-left: 21px; }
.kebab { width: 4px; height: 20px; margin-left: 30px; fill: #c3ccbe; }

.infobar { height: 67px; flex: none; display: flex; align-items: center; border-bottom: 1px solid #4a5346; padding-left: 24px; color: #e0e4dc; font-size: 15px; }
.info-ico { width: 20px; height: 20px; margin-right: 14px; }
.info-text { width: 329px; }
.info-btn { width: 138px; height: 44px; background: #9ccf8f; border-radius: 22px; color: #10240f; display: flex; align-items: center; justify-content: center; font-size: 14px; }
.info-x { margin-left: auto; margin-right: 23px; }

.page { flex: 1; display: flex; flex-direction: column; padding: 0 20px 20px 0; background: radial-gradient(ellipse 1000px 420px at 900px 800px, #2c3729 40%, #323e2d 100%); }
.page-head { height: 78px; display: flex; align-items: center; justify-content: flex-end; font-size: 15.500px; color: #fff; }
.plink { margin-right: 17px; }
.plink + .plink { margin-right: 0; }
.apps { width: 20px; height: 20px; fill: #e6e9e3; margin-left: 36px; }
.av-big { width: 40px; height: 40px; font-size: 18px; font-weight: 600; margin-left: 30px; margin-right: 2px; }
.customize { margin-top: auto; align-self: flex-end; width: 206px; height: 40px; border-radius: 20px; background: #1e5221; color: #cdeac6; display: flex; align-items: center; padding-left: 22px; font-size: 15.300px; box-shadow: 0 1px 6px rgba(0,0,0,.3); white-space: nowrap; }
.pencil { width: 16px; height: 16px; fill: #cdeac6; margin-right: 12px; }

/* Taskbar */
.taskbar { height: 59px; flex: none; background: #1c1c1c; border-top: 1px solid #3a3a3a; display: flex; align-items: center; padding-bottom: 1px; }
.tb-ico { width: 30px; height: 30px; }
.tb-left { width: 515px; padding-left: 26px; }
.tb-start { width: 60px; display: flex; justify-content: center; }
.tb-search { width: 276px; height: 40px; margin-left: 1px; border-radius: 20px; background: #404040; border: 1px solid #4e4e4e; display: flex; align-items: center; padding-left: 14px; font-size: 15.500px; color: #d4d4d4; }
.tb-search-ico { color: #d4d4d4; margin-right: 10px; }
.tb-apps { margin-left: 2px; display: grid; grid-template-columns: repeat(10, 54.800px); }
.tb-app { position: relative; height: 57px; display: flex; align-items: center; justify-content: center; }
.tb-active::before, .tb-open::before { content: ""; position: absolute; left: 3px; right: 3px; top: 3px; bottom: 3px; background: #2b2b2b; border-radius: 4px; }
.tb-open::before { background: #2a2424; }
.tb-app svg { position: relative; }
.dot { position: absolute; bottom: 4px; left: 50%; margin-left: -3.500px; width: 7px; height: 4px; border-radius: 2px; background: #8a8a8a; }
.dot-pink { background: #e8a0b0; }
.bar { position: absolute; bottom: 4px; left: 50%; margin-left: -10px; width: 20px; height: 4px; border-radius: 2px; background: #d8cd7e; }
.svg-t { fill: #fff; font-family: "Open Sans", sans-serif; font-weight: 700; }
.tray { margin-left: auto; padding-right: 18px; display: grid; grid-template-columns: 40px 40px 56px 36px 28px 30px 80px 34px; align-items: center; justify-items: center; color: #fff; }
.tray .ic { color: #fff; stroke-width: 2.500; }
.cloud-i { width: 22px; height: 18px; }
.tray-t { font-size: 14px; }
.tray-s { width: 22px; height: 22px; fill: none; stroke: #fff; stroke-width: 1.700; }
.clock { display: flex; flex-direction: column; align-items: flex-end; justify-self: end; font-size: 13.500px; line-height: 20px; padding-right: 1px; }
.bell { width: 18px; height: 22px; }

/* Windows */
.win { position: absolute; }
.explorer { left: 8px; top: 136px; width: 1136px; height: 725px; background: #1c1c1c; border: 1px solid #3f3f3f; border-radius: 8px; overflow: hidden; display: flex; flex-direction: column; box-shadow: 0 8px 30px rgba(0,0,0,.3); }
.ex-tabs { height: 50px; flex: none; display: flex; align-items: flex-end; padding-left: 11px; background: #1f1f1f; }
.ex-tab { width: 300px; height: 39px; background: #2d2d2d; border-radius: 8px 8px 0 0; display: flex; align-items: center; padding: 0 19px 0 12px; font-size: 14px; font-weight: 600; color: #f0f0f0; }
.ex-folder { width: 19px; height: 16px; margin-right: 13px; }
.ex-tab-x { margin-left: auto; color: #e8e8e8; }
.ex-plus { margin: 0 0 12px 21px; color: #e8e8e8; }
.ex-caption { height: 50px; gap: 40px; padding-right: 20px; align-self: flex-start; padding-bottom: 14px; }
.ex-nav { height: 61px; flex: none; background: #2d2d2d; display: flex; align-items: center; border-bottom: 1px solid #3a3a3a; }
.ex-arrows { display: grid; grid-template-columns: repeat(4, 60px); justify-items: center; margin-left: 4px; }
.ex-arrows .ic { width: 20px; height: 20px; color: #e4e4e4; }
.ex-arrows .faint { color: #6e6e6e; }
.crumbs { margin-left: 8px; width: 616px; height: 40px; background: #3a3a3a; border-radius: 5px; display: grid; grid-template-columns: 52px 40px 99px 40px 63px 40px 113px 40px 50px 40px; align-items: center; justify-items: start; font-size: 16px; color: #f0f0f0; }
.crumbs .ic { color: #e4e4e4; stroke-width: 2; margin-left: 7px; }
.pc { width: 20px; height: 20px; fill: none; stroke: #e4e4e4; stroke-width: 1.300; justify-self: end; margin-right: 15px; }
.ex-search { margin-left: 10px; width: 243px; height: 40px; background: #3a3a3a; border-radius: 5px; display: flex; align-items: center; justify-content: space-between; padding: 0 15px 0 19px; font-size: 16px; color: #cfcfcf; }
.ex-cmd { height: 57px; flex: none; display: flex; align-items: center; border-bottom: 1px solid #3a3a3a; font-size: 13.500px; color: #f0f0f0; background: #1c1c1c; padding-top: 3px; }
.ex-cmd .ic { color: #c8c8c8; }
.cmd-new { width: 119px; display: flex; align-items: center; padding-left: 23px; }
.cmd-new span { margin-right: 7px; }
.cmd-plus { width: 19px; height: 19px; margin-right: 12px; }
.cmd-sep { width: 1px; height: 40px; background: #333; flex: none; }
.cmd-icons { display: grid; grid-template-columns: repeat(6, 60px); justify-items: center; margin-left: 2px; width: 364px; }
.cmd-i { width: 20px; height: 20px; fill: none; stroke-width: 1.300; }
.cmd-btn { display: flex; align-items: center; }
.cmd-sort { margin-left: 18px; width: 109px; }
.cmd-sort span, .cmd-view span { margin: 0 6px 0 10px; }
.cmd-view { width: 100px; }
.cmd-more { width: 20px; height: 4px; margin-left: 20px; fill: #f0f0f0; }
.cmd-details { margin-left: auto; padding-right: 27px; }
.cmd-details span { margin-left: 12px; }
.ex-body { flex: 1; display: flex; min-height: 0; background: #191919; }
.ex-side { position: relative; width: 199px; flex: none; padding: 8px 23px 0 3px; border-right: 2px solid #2a2a2a; overflow: hidden; font-size: 14.300px; color: #f0f0f0; }
.nv { height: 40px; display: flex; align-items: center; padding-right: 3px; flex: none; }
.nv-on { background: #303030; border-radius: 4px; }
.nv-exp { width: 40px; display: flex; justify-content: center; margin-right: 0; }
.nv-exp .ic { stroke-width: 2; color: #7a7a7a; }
.nv-i { width: 20px; height: 20px; margin-right: 5px; }
.pin { width: 16px; height: 16px; margin-left: auto; }
.nv-rule { height: 41px; display: flex; align-items: center; padding: 0 7px 0 10px; }
.nv-rule::before { content: ""; flex: 1; height: 1px; background: #3a3a3a; }
.nv-scroll { position: absolute; left: 182px; top: 21px; width: 6px; height: 322px; background: #8e8e8e; }
.ex-main { flex: 1; min-width: 0; }
.ex-head { display: flex; height: 32px; font-size: 14px; color: #e4e4e4; padding-top: 1px; }
.hd { display: flex; align-items: center; border-right: 1px solid #3a3a3a; padding-left: 7px; position: relative; }
.hd-name { width: 341px; padding-left: 38px; color: #d0d4d8; }
.hd-date { width: 179px; }
.hd-type { width: 150px; }
.hd-size { width: 100px; }
.hd-caret { position: absolute; left: 179px; top: -2px; color: #8a8a8a; }
.ex-rows { margin: 10px 0 0 19px; display: flex; flex-direction: column; gap: 7px; font-size: 14.300px; color: #f0f0f0; }
.row { height: 30px; display: flex; align-items: center; padding-left: 6px; }
.row-i { width: 19px; height: 16px; margin-right: 5px; }
.row-sel { background: #555; border: 1px solid #aaa; padding-left: 5px; margin-top: 0; }
.ex-status { height: 29px; flex: none; background: #1c1c1c; display: flex; align-items: center; padding-left: 17px; font-size: 14.200px; color: #c8c8c8; }
.ex-status i { width: 1px; height: 13px; background: #d8d8d8; margin: 0 12px; }
.st-size { margin-left: 8px; }

/* Excel */
.excel { left: 487px; top: 328px; width: 1280px; height: 558px; background: #0a0a0a; border: 1px solid #5a5a5a; border-radius: 8px; overflow: hidden; display: flex; flex-direction: column; box-shadow: 0 8px 36px rgba(0,0,0,.35); }
.xl-title { height: 50px; flex: none; display: flex; align-items: center; padding: 10px 0 0 21px; font-size: 12px; color: #666; }
.xl-title svg { stroke: #5a5a5a; fill: none; stroke-width: 1.400; }
.xl-logo { width: 20px; height: 20px; }
.xl-autosave { margin-left: 20px; width: 53px; }
.xl-toggle { margin-left: 9px; width: 54px; height: 25px; border: 1px solid #555; border-radius: 13px; display: flex; align-items: center; padding-left: 3px; color: #666; }
.xl-toggle b { width: 18px; height: 18px; border-radius: 50%; background: #6e6e6e; margin-right: 8px; }
.xl-save { width: 19px; height: 20px; margin-left: 16px; }
.xl-undo { width: 18px; height: 20px; margin-left: 16px; }
.xl-redo { width: 18px; height: 20px; margin-left: 13px; }
.xl-c1 { margin-left: 6px; }
.xl-cust { width: 10px; height: 10px; margin-left: 18px; }
.xl-name { margin-left: 21px; width: 34px; font-size: 13px; color: #555; }
.xl-search { margin-left: 85px; width: 345px; height: 39px; background: #151515; border: 1px solid #3c3c3c; border-radius: 4px; display: flex; align-items: center; padding-left: 17px; font-size: 16px; color: #5c5c5c; }
.xl-search .ic { margin-right: 16px; color: #5a5a5a; }
.av-teal { width: 30px; height: 30px; background: #0a8181; font-size: 11.500px; margin-left: 173px; color: #e8f8f8; }
.xl-bulb { width: 14px; height: 20px; margin-left: 37px; }
.xl-title .ic { color: #5a5a5a; }
.xl-min { margin-left: 42px; }
.xl-max { margin-left: 40px; }
.xl-close { margin-left: 40px; }
.xl-tabs { height: 48px; flex: none; display: flex; align-items: flex-start; padding: 14px 15px 0 27px; }
.xl-tablist { margin-top: 6px; display: grid; grid-template-columns: 57px 70px 67px 117px 93px 60px 77px 60px 59px auto; font-size: 16px; line-height: 20px; color: #f0f0f0; white-space: nowrap; }
.xl-tab-on { font-weight: 600; justify-self: start; height: 25px; border-bottom: 3px solid #4dbb7c; color: #fff; font-size: 15.500px; }
.xl-comments { margin-left: auto; width: 117px; height: 29px; border: 1px solid #3a3a3a; border-radius: 4px; display: flex; align-items: center; padding-left: 5px; gap: 4px; font-size: 16px; color: #646464; }
.xl-comments .ic { color: #646464; }
.ribbon { margin: 0 10px 0 10px; height: 124px; flex: none; background: #2a2a2a; border-radius: 8px; padding-top: 6px; display: flex; font-size: 14.500px; color: #f4f4f4; }
.rg { height: 111px; border-right: 1px solid #555; display: flex; flex-direction: column; flex: none; }
.rg-clip { width: 139px; }
.rg-font { width: 200px; }
.rg-align { width: 91px; }
.rg-num { width: 76px; }
.rg-styles { width: 228px; }
.rg-cells { width: 69px; }
.rg-edit { width: 70px; }
.rg-addin { width: 77px; }
.rg-ana { width: 133px; }
.rg-pdf { width: 97px; }
.rg-end { flex: 1; display: flex; justify-content: flex-end; align-items: flex-end; padding: 0 16px 0 0; height: 111px; }
.rg-body { flex: 1; min-height: 0; }
.rg-label { height: 11px; line-height: 11px; font-size: 12.500px; text-align: center; color: #f0f0f0; white-space: nowrap; position: relative; }
.lab-clip { padding-right: 18px; }
.launch { position: absolute; right: 3px; top: -1px; width: 12px; height: 12px; fill: none; stroke: #cfcfcf; stroke-width: 1.200; }
.launch-off { stroke: #666; }
.off { color: #6a6a6a; font-size: 14px; line-height: 20px; }
.clip-body { display: flex; }
.paste { margin-left: 8px; width: 66px; display: flex; flex-direction: column; align-items: center; padding-top: 4px; }
.paste-i { width: 34px; height: 38px; fill: none; stroke: #8a8a8a; stroke-width: 1.500; margin-bottom: 4px; }
.paste .ic { margin-top: 4px; }
.clip-col { padding-top: 3px; display: flex; flex-direction: column; gap: 11px; }
.clip-i { width: 20px; height: 20px; fill: none; stroke: #a8a8a8; stroke-width: 1.200; }
.clip-copy { display: flex; align-items: center; gap: 14px; }
.font-body { padding-left: 10px; }
.font-top { display: flex; gap: 4px; margin-top: -1px; }
.fbox { height: 28px; background: #1c1c1c; border: 1px solid #3e3e3e; border-radius: 5px; display: flex; align-items: center; justify-content: flex-end; padding-right: 4px; }
.f-name { width: 115px; }
.f-size { width: 60px; }
.font-r2 { margin-top: 1px; height: 32px; display: grid; grid-template-columns: 31px 32px 31px 16px 10px 24px 38px; align-items: center; justify-items: center; font-family: "Liberation Serif", serif; }
.fc { color: #8c8c8c; font-size: 16px; font-family: "Open Sans", sans-serif; text-decoration-thickness: 1.500px; }
.fb { font-weight: 700; }
.fi { font-family: "Liberation Serif", serif; font-size: 18px; }
.fa1, .fa2 { font-size: 18px; line-height: 20px; white-space: nowrap; }
.fc sup { font-size: 10px; line-height: 0; }
.vsep { width: 1px; height: 28px; background: #555; }
.font-r3 { height: 32px; display: grid; grid-template-columns: 29px 18px 8px 28px 18px 38px 10px; align-items: center; justify-items: center; }
.f-ic { width: 20px; height: 20px; fill: none; stroke: #888; stroke-width: 1.100; }
.f-fill { display: flex; flex-direction: column; align-items: center; }
.f-fill .f-ic { height: 14px; }
.swatch { width: 20px; height: 5px; background: #666; margin-top: 1px; }
.fa3 { color: #8c8c8c; font-size: 17px; line-height: 14px; }
.big { display: flex; flex-direction: column; align-items: center; white-space: nowrap; line-height: 20px; }
.big-i { fill: none; stroke: #cfcfcf; stroke-width: 1.400; }
.align-i { width: 36px; height: 26px; margin: 7px 0 10px; }
.pct-i { width: 30px; height: 30px; margin: 5px 0 8px; }
.big-c { margin-top: 3px; color: #f0f0f0; stroke-width: 2; }
.big-tall .cells-i { width: 36px; height: 36px; margin: -1px 0 8px; }
.big-tall .edit-i { width: 36px; height: 38px; margin: -1px 0 6px; }
.styles-body { padding-left: 14px; margin-top: -3px; }
.st-row { height: 32px; display: flex; align-items: center; font-size: 14.200px; color: #666; white-space: nowrap; }
.st-i { width: 20px; height: 20px; fill: none; stroke: #8a8a8a; stroke-width: 1.100; margin-right: 5px; }
.st-row .ic { margin-left: 4px; color: #8a8a8a; }
.col-off { display: flex; flex-direction: column; align-items: center; white-space: nowrap; }
.off-i { width: 36px; height: 36px; margin: 4px 0 5px; fill: none; stroke: #666; stroke-width: 1.500; }
.ana-i { stroke: #8a8a8a; }
.cop-i { width: 40px; stroke: #8a8a8a; }
.ana-body { display: flex; }
.ana-a { width: 75px; }
.ana-c { width: 40px; }
.pdf-i { width: 32px; height: 40px; margin: 2px 0 3px; stroke: #555; }
.fx-bar { margin: 10px 10px 0 10px; height: 29px; flex: none; display: flex; align-items: center; }
.fx-box { height: 29px; background: #2a2a2a; border: 1px solid #585858; border-radius: 4px; display: flex; align-items: center; }
.fx-name { width: 126px; justify-content: flex-end; padding-right: 5px; }
.fx-name .ic { color: #e0e0e0; stroke-width: 1.800; }
.fx-dots { width: 4px; height: 14px; margin: 0 11px; fill: #e0e0e0; }
.fx-btns { width: 106px; display: grid; grid-template-columns: 30px 29px 34px 10px; justify-items: center; }
.fx-chk { width: 20px; height: 16px; fill: none; stroke: #6d6d6d; stroke-width: 1.300; }
.fx-fx { font-family: "Liberation Serif", serif; font-style: italic; font-weight: 700; font-size: 19px; color: #d0d0d0; }
.fx-btns .ic:last-child { color: #cfcfcf; justify-self: center; }
.fx-input { width: 993px; margin-left: 6px; justify-content: flex-end; padding-right: 3px; }
.xl-grid { flex: 1; background: #0a0a0a; }
.xl-status { height: 27px; flex: none; background: #171717; border-top: 1px solid #333; display: flex; align-items: center; padding-left: 13px; font-size: 12px; color: #dcdcdc; }
.st-right { margin-left: auto; display: grid; grid-template-columns: 50px 50px 50px 24px 125px 20px 56px; align-items: center; justify-items: center; padding-right: 12px; }
.st-v { width: 17px; height: 17px; fill: none; stroke: #555; stroke-width: 1.300; }
.st-zm { color: #5c5c5c; font-size: 16px; line-height: 14px; }
.st-slider { position: relative; width: 125px; height: 1px; background: #9a9a9a; }
.st-slider i { position: absolute; left: 62px; top: -3px; width: 1px; height: 7px; background: #bbb; }
.st-pct { color: #5c5c5c; font-size: 12px; }
```
